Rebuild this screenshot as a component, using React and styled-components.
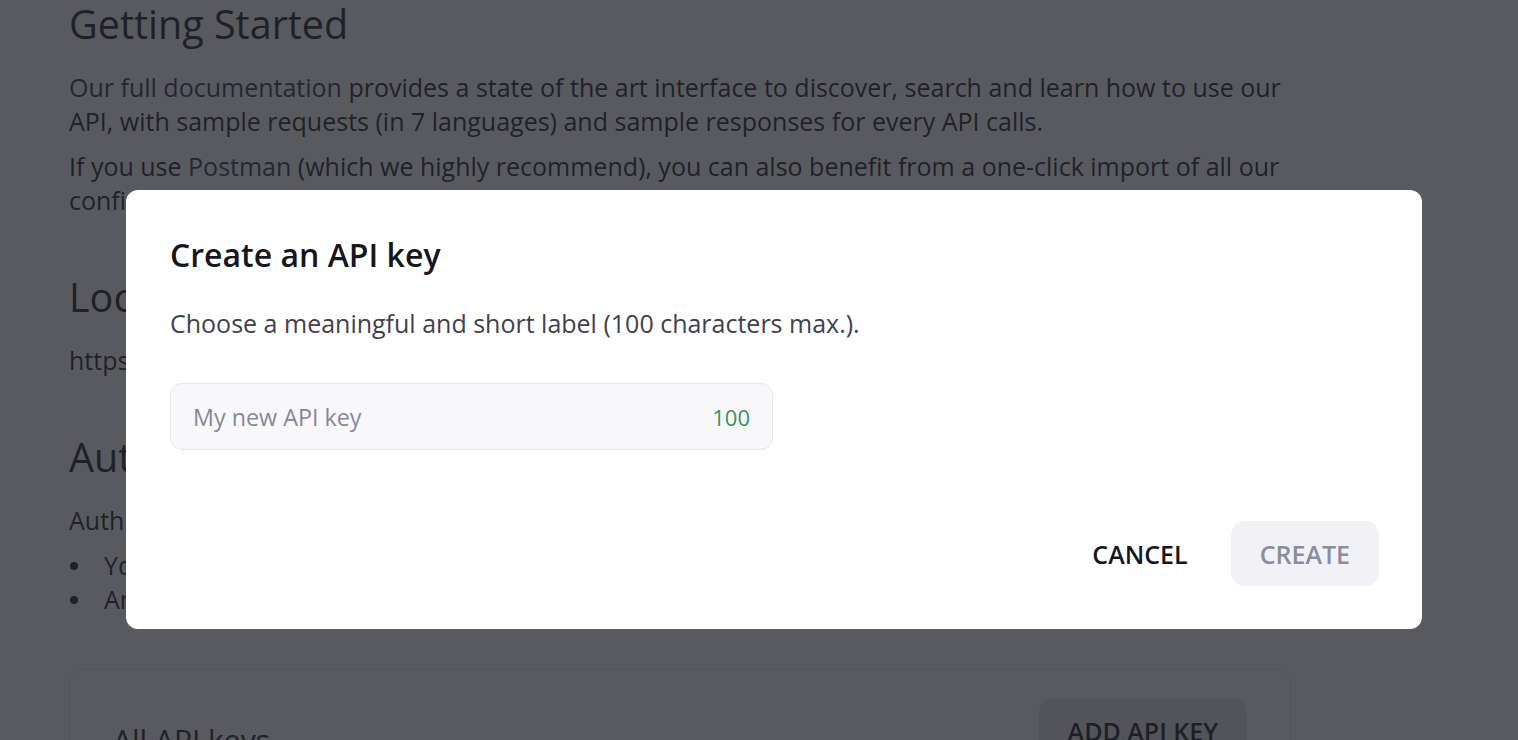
import styled, { createGlobalStyle } from "styled-components";

const GlobalStyle = createGlobalStyle`
  html, body {
    margin: 0;
    padding: 0;
    background: #ffffff;
    font-family: "Open Sans", "Noto Sans", sans-serif;
    color: #1b1c22;
    overflow: hidden;
  }
  * {
    box-sizing: border-box;
  }
`;

const Page = styled.main`
  width: 1222px;
  margin-left: 69px;
`;

const Heading = styled.h2`
  margin: ${(p) => (p.$first ? "0" : "56px")} 0 22px;
  font-size: 39.5px;
  line-height: 48px;
  font-weight: 400;
`;

const Paragraph = styled.p`
  margin: 0 0 11px;
  font-size: 25px;
  line-height: 34px;
`;

const Link = styled.a`
  color: #2a3550;
  text-decoration: none;
`;

const List = styled.ul`
  margin: 0;
  padding: 0;
  list-style: none;
  font-size: 25px;
  line-height: 34px;
  li {
    display: flex;
    align-items: center;
  }
  li::before {
    content: "";
    flex: none;
    width: 8px;
    height: 8px;
    border-radius: 50%;
    background: currentColor;
    margin: 2px 26px 0 1px;
  }
`;

const Card = styled.section`
  margin-top: 53px;
  border: 1px solid #e9e9ee;
  border-radius: 12px;
  padding: 28px 43px;
  display: flex;
  justify-content: space-between;
  align-items: flex-start;
`;

const CardTitle = styled.h3`
  margin: 22px 0 0;
  font-size: 30px;
  line-height: 40px;
  font-weight: 400;
`;

const Button = styled.button`
  font-family: "Open Sans", "Noto Sans", sans-serif;
  font-size: 25px;
  font-weight: 600;
  text-transform: uppercase;
  height: 65px;
  padding: 0 29px;
  border: none;
  border-radius: 14px;
  cursor: pointer;
  background: ${(p) =>
    p.$variant === "ghost" ? "transparent" : p.$variant === "disabled" ? "#f1f1f6" : "#e7e7ec"};
  color: ${(p) => (p.$variant === "disabled" ? "#8a8d9c" : "#16171c")};
`;

const Overlay = styled.div`
  position: fixed;
  inset: 0;
  background: rgba(34, 35, 41, 0.75);
`;

const Modal = styled.div`
  position: fixed;
  top: 190px;
  left: 126px;
  width: 1296px;
  background: #ffffff;
  border-radius: 12px;
  padding: 46px 43px 43px 44px;
  display: flex;
  flex-direction: column;
`;

const ModalTitle = styled.h1`
  margin: 0;
  font-size: 32px;
  line-height: 38px;
  font-weight: 600;
  color: #16171c;
`;

const ModalText = styled.p`
  margin: 32px 0 0;
  font-size: 25px;
  line-height: 34px;
  color: #3f414c;
`;

const Field = styled.label`
  margin-top: 43px;
  width: 603px;
  height: 67px;
  display: flex;
  align-items: center;
  gap: 16px;
  padding: 0 22px;
  border: 1px solid #e6e6ee;
  border-radius: 12px;
  background: #f8f8fb;
`;

const Input = styled.input`
  flex: 1;
  min-width: 0;
  border: none;
  outline: none;
  background: transparent;
  font-family: "Open Sans", "Noto Sans", sans-serif;
  font-size: 23.3px;
  color: #16171c;
  padding: 0;
  &::placeholder {
    color: #868898;
  }
`;

const Counter = styled.span`
  font-size: 22px;
  color: #3c9160;
`;

const Actions = styled.div`
  margin-top: 71px;
  display: flex;
  justify-content: flex-end;
  gap: 14px;
`;

const App = () => {
  return (
    <>
      <GlobalStyle />
      <Page>
        <Heading $first>Getting Started</Heading>
        <Paragraph>
          <Link>Our full documentation</Link> provides a state of the art interface to
          discover, search and learn how to use our API, with sample requests (in 7
          languages) and sample responses for every API calls.
        </Paragraph>
        <Paragraph>
          If you use <Link>Postman</Link> (which we highly recommend), you can also benefit
          from a one-click import of all our configurations with the collection below.
        </Paragraph>
        <Heading>Location</Heading>
        <Paragraph>https://api.example.com/v1</Paragraph>
        <Heading>Authentication</Heading>
        <Paragraph>Authentication is done through API keys:</Paragraph>
        <List>
          <li>You can create as many API keys as you need.</li>
          <li>An API key must be sent in the header of every request.</li>
        </List>
        <Card>
          <CardTitle>All API keys</CardTitle>
          <Button>Add API key</Button>
        </Card>
      </Page>
      <Overlay />
      <Modal role="dialog">
        <ModalTitle>Create an API key</ModalTitle>
        <ModalText>Choose a meaningful and short label (100 characters max.).</ModalText>
        <Field>
          <Input placeholder="My new API key" maxLength={100} />
          <Counter>100</Counter>
        </Field>
        <Actions>
          <Button $variant="ghost">Cancel</Button>
          <Button $variant="disabled">Create</Button>
        </Actions>
      </Modal>
    </>
  );
};

export default App;
